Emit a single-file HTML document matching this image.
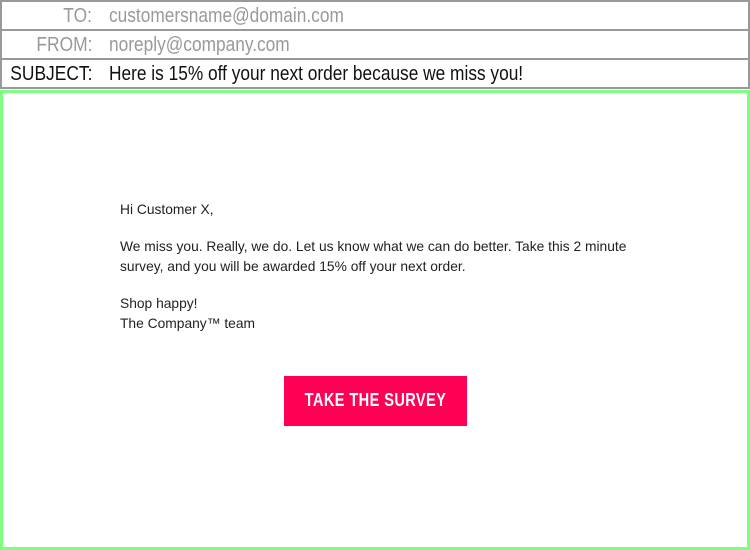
<!DOCTYPE html>
<html><head><meta charset="utf-8"><style>
*{margin:0;padding:0;box-sizing:border-box}
body{width:750px;height:550px;background:#fff;font-family:"Liberation Sans",sans-serif;position:relative;overflow:hidden}
.row{position:absolute;left:0;width:750px;border:2px solid #999;font-size:20px;line-height:28px}
.lab{position:absolute;right:656px;top:0;white-space:nowrap;transform:scaleX(0.87);transform-origin:right center}
.val{position:absolute;left:107px;top:0;white-space:nowrap;transform:scaleX(0.865);transform-origin:left center}
.g{color:#999}
.k{color:#111}
#box{position:absolute;left:0;top:90px;width:750px;height:460px;border:3px solid #7fff7f}
.t{position:absolute;left:120px;font-size:14px;color:#222;line-height:20px;white-space:nowrap;transform:scaleX(0.986);transform-origin:left top}
#btn{position:absolute;left:284px;top:376px;width:183px;height:50px;background:#ff0055}
#btn span{position:absolute;left:0;right:0;top:0;text-align:center;color:#fff;font-weight:bold;font-size:18px;line-height:48px;letter-spacing:0.5px;transform:scaleX(0.81)}
</style></head><body>
<div class="row" style="top:0;height:31px"><span class="lab g">TO:</span><span class="val g">customersname@domain.com</span></div>
<div class="row" style="top:29px;height:31px"><span class="lab g">FROM:</span><span class="val g">noreply@company.com</span></div>
<div class="row" style="top:58px;height:31px"><span class="lab k">SUBJECT:</span><span class="val k">Here is 15% off your next order because we miss you!</span></div>
<div id="box"></div>
<div class="t" style="top:199px">Hi Customer X,</div>
<div class="t" style="top:236px">We miss you. Really, we do. Let us know what we can do better. Take this 2 minute<br>survey, and you will be awarded 15% off your next order.</div>
<div class="t" style="top:293px">Shop happy!<br>The Company™ team</div>
<div id="btn"><span>TAKE THE SURVEY</span></div>
</body></html>
